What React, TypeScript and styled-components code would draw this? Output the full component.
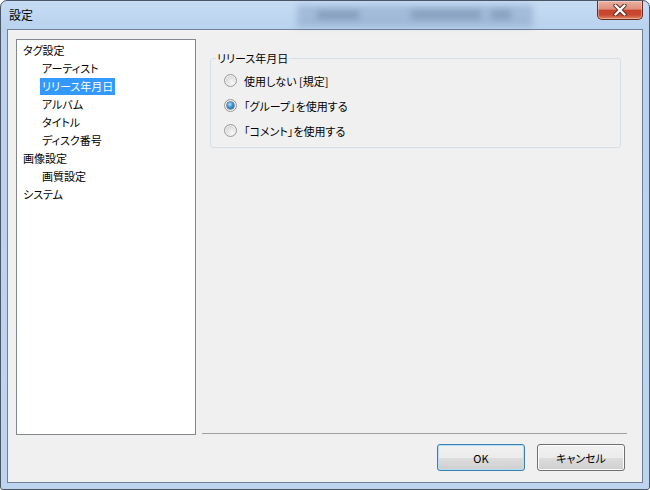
import React from "react";
import styled, { createGlobalStyle, css } from "styled-components";

const Global = createGlobalStyle`
  html, body { margin: 0; padding: 0; background: #ffffff; }
  body {
    font-family: "Noto Sans CJK JP", "Noto Sans", sans-serif;
    font-size: 11px;
    color: #000;
  }
  * { box-sizing: border-box; }
`;

const Window = styled.div`
  width: 650px;
  height: 490px;
  display: flex;
  flex-direction: column;
  border: 1px solid #4b5667;
  border-radius: 7px 7px 3px 3px;
  background: linear-gradient(180deg, #c6dcf3 0%, #b9d2ed 28px, #bdd5ef 100%);
  font-feature-settings: "palt";
  overflow: hidden;
`;

const TitleBar = styled.div`
  position: relative;
  height: 28px;
  display: flex;
  align-items: flex-start;
  flex: none;

  &::before {
    content: "";
    position: absolute;
    left: 296px;
    top: 4px;
    width: 236px;
    height: 22px;
    background: rgba(92, 124, 166, 0.3);
    filter: blur(3px);
  }
  &::after {
    content: "";
    position: absolute;
    left: 316px;
    top: 10px;
    width: 42px;
    height: 8px;
    background: rgba(50, 70, 100, 0.26);
    filter: blur(3px);
  }
`;

const Smudge = styled.span<{ $left: number; $width: number }>`
  position: absolute;
  top: 9px;
  left: ${(p) => p.$left}px;
  width: ${(p) => p.$width}px;
  height: 9px;
  background: rgba(50, 70, 100, 0.22);
  filter: blur(3px);
`;

const TitleText = styled.span`
  position: relative;
  line-height: 28px;
  padding-left: 8px;
  font-size: 12px;
  color: #000;
`;

const CloseButton = styled.div`
  position: relative;
  margin-left: auto;
  margin-right: 6px;
  width: 46px;
  height: 19px;
  border: 1px solid #6a2b21;
  border-top: none;
  border-radius: 0 0 5px 5px;
  background: linear-gradient(
    180deg,
    #eab0a2 0%,
    #df8e7b 45%,
    #c7432c 52%,
    #c94a32 78%,
    #e08767 100%
  );
  box-shadow: inset 0 0 0 1px rgba(255, 255, 255, 0.35);
  display: flex;
  align-items: center;
  justify-content: center;
`;

const Client = styled.div`
  flex: 1;
  margin: 0 6px 6px 6px;
  border: 1px solid #6f8197;
  background: #f0f0f0;
  display: flex;
  flex-direction: column;
  padding: 9px 0 11px 8px;
`;

const TopRow = styled.div`
  height: 396px;
  display: flex;
`;

const Tree = styled.div`
  width: 180px;
  flex: none;
  border: 1px solid #828790;
  background: #ffffff;
  padding: 1px 0;
`;

const TreeRow = styled.div<{ $depth: number }>`
  height: 18px;
  display: flex;
  align-items: center;
  padding-left: ${(p) => 4 + p.$depth * 19}px;
`;

const TreeLabel = styled.span<{ $selected?: boolean }>`
  height: 17px;
  line-height: 17px;
  padding: 0 2px;
  white-space: nowrap;
  background: ${(p) => (p.$selected ? "#3399ff" : "transparent")};
  color: ${(p) => (p.$selected ? "#ffffff" : "#000000")};
`;

const RightPanel = styled.div`
  flex: 1;
  display: flex;
  flex-direction: column;
`;

const GroupBox = styled.fieldset`
  margin: 11px 21px 0 14px;
  padding: 2px 0 4px 5px;
  border: 1px solid #d5dfe5;
  border-radius: 3px;
  min-width: 0;
`;

const Legend = styled.legend`
  padding: 0 1px;
  line-height: 16px;
  font-size: 11px;
  color: #000;
`;

const RadioRow = styled.label`
  height: 25px;
  display: flex;
  align-items: center;
  gap: 7px;
  padding-left: 8px;
  white-space: pre;
`;

const Radio = styled.span<{ $checked?: boolean }>`
  position: relative;
  flex: none;
  width: 13px;
  height: 13px;
  border-radius: 50%;
  border: 1px solid #9a9a9a;
  background: radial-gradient(
    circle at 65% 70%,
    #f8f8f8 0%,
    #e2e2e2 45%,
    #c9c9c9 100%
  );
  box-shadow: inset 0 0 0 1px #f2f2f2;
  ${(p) =>
    p.$checked &&
    css`
      &::after {
        content: "";
        position: absolute;
        left: 2px;
        top: 2px;
        width: 7px;
        height: 7px;
        border-radius: 50%;
        background: radial-gradient(
          circle at 40% 35%,
          #b0e4fc 0%,
          #3f92d8 45%,
          #164a82 100%
        );
        box-shadow: 0 0 0 0.5px #1d3f66;
      }
    `}
`;

const Spacer = styled.div`
  flex: 1;
`;

const Separator = styled.div`
  height: 1px;
  background: #a0a0a0;
  margin: 0 15px 1px 6px;
`;

const Footer = styled.div`
  display: flex;
  justify-content: flex-end;
  gap: 12px;
  padding: 9px 17px 0 0;
`;

const Button = styled.button<{ $default?: boolean }>`
  width: 88px;
  height: 27px;
  padding: 0;
  font-family: inherit;
  font-size: 11px;
  font-feature-settings: "palt";
  color: #000;
  border: 1px solid ${(p) => (p.$default ? "#3c7fb1" : "#707070")};
  border-radius: 3px;
  background: linear-gradient(
    180deg,
    #f2f2f2 0%,
    #ebebeb 50%,
    #dddddd 50%,
    #cfcfcf 100%
  );
  box-shadow: inset 0 0 0 1px
    ${(p) => (p.$default ? "#b2e0f8" : "#fbfbfb")};
`;

const treeItems: { label: string; depth: number; selected?: boolean }[] = [
  { label: "タグ設定", depth: 0 },
  { label: "アーティスト", depth: 1 },
  { label: "リリース年月日", depth: 1, selected: true },
  { label: "アルバム", depth: 1 },
  { label: "タイトル", depth: 1 },
  { label: "ディスク番号", depth: 1 },
  { label: "画像設定", depth: 0 },
  { label: "画質設定", depth: 1 },
  { label: "システム", depth: 0 },
];

const radios = [
  { label: "使用しない [規定]", checked: false },
  { label: "「グループ」を使用する", checked: true },
  { label: "「コメント」を使用する", checked: false },
];

const CloseIcon = () => (
  <svg width="14" height="12" viewBox="0 0 14 12">
    <path
      d="M2.5 1.5 L11.5 10.5 M11.5 1.5 L2.5 10.5"
      stroke="#5a2a22"
      strokeWidth="4.2"
      strokeLinecap="round"
      fill="none"
    />
    <path
      d="M2.5 1.5 L11.5 10.5 M11.5 1.5 L2.5 10.5"
      stroke="#ffffff"
      strokeWidth="2.4"
      strokeLinecap="round"
      fill="none"
    />
  </svg>
);

export default function App() {
  return (
    <>
      <Global />
      <Window>
        <TitleBar>
          <Smudge $left={410} $width={70} />
          <Smudge $left={490} $width={20} />
          <TitleText>設定</TitleText>
          <CloseButton>
            <CloseIcon />
          </CloseButton>
        </TitleBar>
        <Client>
          <TopRow>
            <Tree>
              {treeItems.map((it) => (
                <TreeRow key={it.label} $depth={it.depth}>
                  <TreeLabel $selected={it.selected}>{it.label}</TreeLabel>
                </TreeRow>
              ))}
            </Tree>
            <RightPanel>
              <GroupBox>
                <Legend>リリース年月日</Legend>
                {radios.map((r) => (
                  <RadioRow key={r.label}>
                    <Radio $checked={r.checked} />
                    <span>{r.label}</span>
                  </RadioRow>
                ))}
              </GroupBox>
              <Spacer />
              <Separator />
            </RightPanel>
          </TopRow>
          <Footer>
            <Button $default>OK</Button>
            <Button>キャンセル</Button>
          </Footer>
        </Client>
      </Window>
    </>
  );
}
